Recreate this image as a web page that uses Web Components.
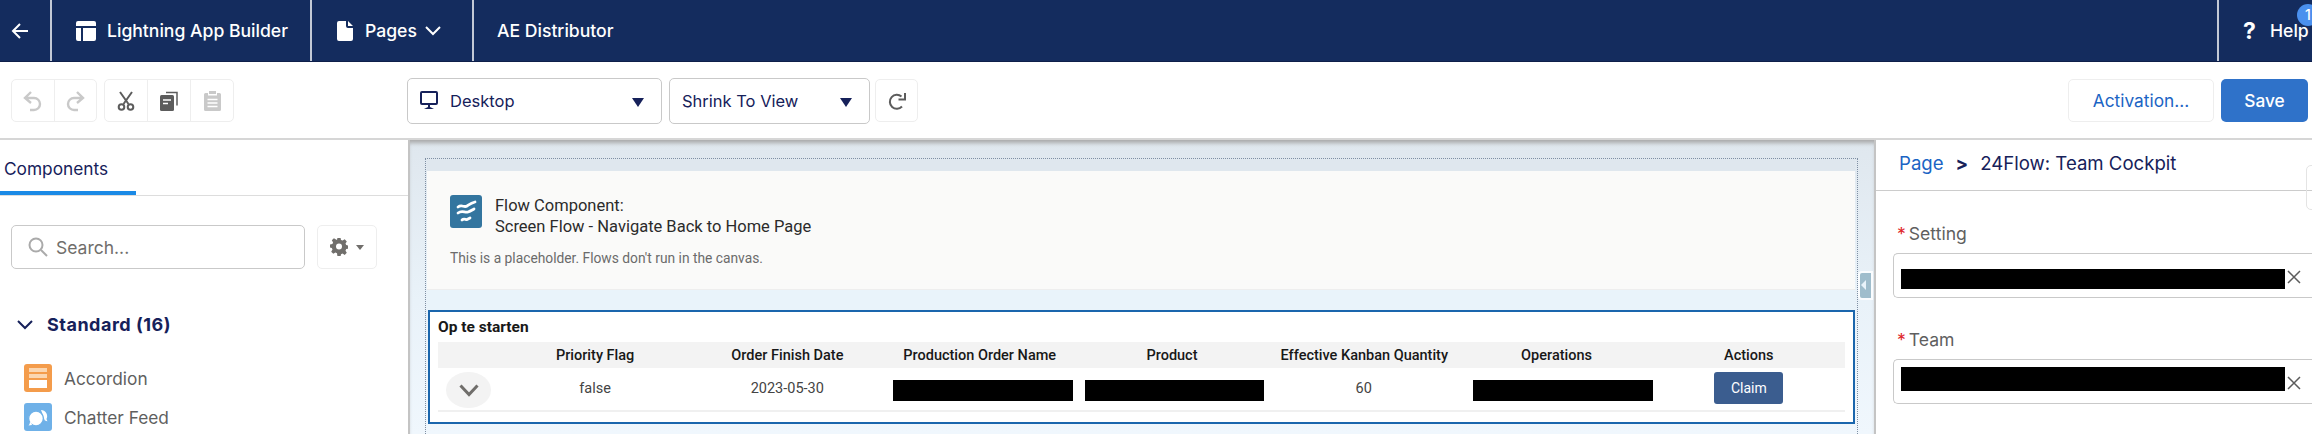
<!DOCTYPE html>
<html lang="en">
<head>
<meta charset="utf-8">
<title>Lightning App Builder</title>
<style>
    html, body { margin: 0; height: 434px; overflow: hidden; background: #fff; }
    body { font-family: Inter, "Liberation Sans", sans-serif; }
    builder-app { height: 434px; }
</style>
</head>
<body>
<builder-app>
    <builder-header slot="header"></builder-header>
    <builder-toolbar slot="toolbar"></builder-toolbar>
    <component-panel slot="left"></component-panel>
    <page-canvas slot="center"></page-canvas>
    <property-panel slot="right"></property-panel>
</builder-app>

<script>
// Mock data for the canvas table
const TABLE_DATA = {
    title: 'Op te starten',
    columns: ['Priority Flag', 'Order Finish Date', 'Production Order Name', 'Product', 'Effective Kanban Quantity', 'Operations', 'Actions'],
    row: [
        { text: 'false' },
        { text: '2023-05-30' },
        { redact: true, left: 10, width: 180 },
        { redact: true, left: 9, width: 179 },
        { text: '60' },
        { redact: true, left: 13, width: 180 },
        { button: 'Claim' }
    ]
};

const ICONS = {
    back: '<svg width="20" height="20" viewBox="0 0 20 20" fill="none" stroke="#fff" stroke-width="2"><path d="M18 10H3M10 3l-7 7 7 7"/></svg>',
    builder: '<svg width="22" height="22" viewBox="0 0 22 22"><path fill="#fff" d="M3 1h16a2 2 0 0 1 2 2v3H1V3a2 2 0 0 1 2-2zM1 8h5v13H3a2 2 0 0 1-2-2zM8 8h13v11a2 2 0 0 1-2 2H8z"/></svg>',
    page: '<svg width="16" height="22" viewBox="0 0 16 22"><path fill="#fff" d="M2 1h7v5a2 2 0 0 0 2 2h5v11a2 2 0 0 1-2 2H2a2 2 0 0 1-2-2V3a2 2 0 0 1 2-2zM11 1l5 5h-5z"/></svg>',
    chevron: '<svg width="16" height="10" viewBox="0 0 16 10" fill="none" stroke="currentColor" stroke-width="2"><path d="M1 1l7 7 7-7"/></svg>',
    undo: '<svg width="20" height="22" viewBox="0 0 20 22" fill="none" stroke="#c9c9c9" stroke-width="2.4"><path d="M8 2L2 8l6 5M2 8h9a6 6 0 0 1 0 12H7"/></svg>',
    redo: '<svg width="20" height="22" viewBox="0 0 20 22" fill="none" stroke="#c9c9c9" stroke-width="2.4"><path d="M12 2l6 6-6 5M18 8H9a6 6 0 0 0 0 12h4"/></svg>',
    cut: '<svg width="18" height="20" viewBox="0 0 18 20" fill="none" stroke="#5c5c5c" stroke-width="2"><path d="M3 1l8.500 12M15 1L6.500 13"/><circle cx="4.500" cy="16" r="2.800"/><circle cx="13.500" cy="16" r="2.800"/></svg>',
    copy: '<svg width="18" height="20" viewBox="0 0 18 20"><path fill="none" stroke="#5c5c5c" stroke-width="1.500" d="M6 1.500h11v13"/><rect x="0" y="4" width="14" height="16" rx="1.500" fill="#5c5c5c"/><path stroke="#fff" stroke-width="1.600" d="M3 9h8M3 12.500h5"/></svg>',
    paste: '<svg width="17" height="20" viewBox="0 0 17 20"><path fill="#c9c9c9" d="M5 0h7v3H5zM1.500 2H4v2.500h9V2h2.500A1.500 1.500 0 0 1 17 3.500v15a1.500 1.500 0 0 1-1.500 1.500h-14A1.500 1.500 0 0 1 0 18.500v-15A1.500 1.500 0 0 1 1.500 2z"/><path stroke="#fff" stroke-width="1.500" d="M3.500 8.500h10M3.500 12h10M3.500 15.500h10"/></svg>',
    desktop: '<svg width="20" height="20" viewBox="0 0 20 20" fill="none"><rect x="1" y="1" width="16" height="12" rx="1" stroke="#16215a" stroke-width="2"/><path fill="#16215a" d="M8 14h2v2l4 2H4l4-2z"/></svg>',
    refresh: '<svg width="20" height="20" viewBox="0 0 20 20" fill="none" stroke="#5c5c5c" stroke-width="2"><path d="M14.500 5.500a7 7 0 1 0 .5 10"/><path d="M18 2v6.500h-6.500"/></svg>',
    search: '<svg width="20" height="20" viewBox="0 0 20 20" fill="none" stroke="#aaa" stroke-width="2"><circle cx="8" cy="8" r="6.500"/><path d="M13 13l6 6"/></svg>',
    gear: '<svg width="18" height="18" viewBox="0 0 18 18"><path fill="#706e6b" d="M7.500 0h3l.5 2.400 1.600.7 2.100-1.300 2.100 2.100-1.300 2.100.7 1.600 2.400.5v3l-2.400.5-.7 1.600 1.300 2.100-2.100 2.100-2.100-1.300-1.600.7-.5 2.400h-3L7 15.700l-1.600-.7-2.100 1.300-2.100-2.100 1.300-2.100-.7-1.600L0 10V7l2.400-.5.7-1.600-1.300-2.100 2.100-2.100 2.100 1.300L7 2.400z" transform="translate(0 -.5)"/><circle cx="9" cy="8.500" r="3" fill="#fff"/></svg>',
    accordion: '<svg width="28" height="28" viewBox="0 0 28 28"><rect width="28" height="28" rx="3" fill="#f49c4b"/><path fill="#fbd6b0" d="M5 4h18v4H5zM5 10h18v4H5z"/><path fill="#fff" d="M5 16h18v8H5z"/></svg>',
    chatter: '<svg width="28" height="28" viewBox="0 0 28 28"><rect width="28" height="28" rx="3" fill="#6fb1e8"/><path fill="#fff" d="M17 7a6.200 6.200 0 0 1 5.500 9c.2 1 .6 1.600 1 2.200-1 0-2-.3-2.800-.9z"/><circle cx="12" cy="15.500" r="7.400" fill="#fff" stroke="#6fb1e8" stroke-width="1.400"/><path fill="#fff" d="M7 19l1 3-3.500.6c1-.9 1.300-2 1.300-3z"/></svg>',
    flow: '<svg width="32" height="33" viewBox="0 0 32 33"><rect width="32" height="33" rx="3" fill="#33759f"/><g fill="none" stroke="#fff" stroke-width="2.800" stroke-linecap="round"><path d="M8 12c4-3 6 1 9-1s4-3 8-4"/><path d="M8 18c4-3 7 0 10-1s4-2 6-3"/><path d="M12 25c2-2 4 0 5-.5s2-1 3-1.500"/></g></svg>',
    close: '<svg width="14" height="14" viewBox="0 0 14 14" fill="none" stroke="#5c5c5c" stroke-width="1.500"><path d="M1 1l12 12M13 1L1 13"/></svg>'
};

// ==========================================================================
// Web Component: <builder-app>
// ==========================================================================
class BuilderApp extends HTMLElement {
    constructor() {
        super();
        this.attachShadow({ mode: 'open' });
    }

    connectedCallback() {
        this.shadowRoot.innerHTML = `
            <style>
                :host {
                    display: grid;
                    grid-template-columns: 408px 1fr 436px;
                    grid-template-rows: 62px 78px 1fr;
                    overflow: hidden;
                }
                ::slotted([slot=header]), ::slotted([slot=toolbar]) { grid-column: 1 / -1; }
            </style>
            <slot name="header"></slot>
            <slot name="toolbar"></slot>
            <slot name="left"></slot>
            <slot name="center"></slot>
            <slot name="right"></slot>
        `;
    }
}
customElements.define('builder-app', BuilderApp);

// ==========================================================================
// Web Component: <builder-header>
// ==========================================================================
class BuilderHeader extends HTMLElement {
    constructor() {
        super();
        this.attachShadow({ mode: 'open' });
    }

    connectedCallback() {
        this.shadowRoot.innerHTML = `
            <style>
                :host {
                    display: flex;
                    background: #142c5e;
                    color: #fff;
                    font-size: 17.600px;
                    font-weight: 500;
                    border-bottom: 1px solid #0e1f4a;
                    box-sizing: border-box;
                    height: 62px;
                }
                .item {
                    display: flex;
                    align-items: center;
                    box-sizing: border-box;
                    border-right: 2px solid #c3c9d6;
                    flex: none;
                }
                .back { width: 52px; padding-left: 10px; }
                .app { width: 260px; padding-left: 23px; gap: 10px; }
                .pages { width: 162px; padding-left: 25px; gap: 12px; }
                .pages svg:last-child { margin-left: -4px; }
                .name { padding-left: 23px; border: none; }
                .fill { flex: 1; }
                .help {
                    position: relative;
                    width: 95px;
                    border: none;
                    border-left: 2px solid #c3c9d6;
                    padding-left: 24px;
                    gap: 13px;
                }
                .q { font-size: 23px; font-weight: 700; width: 14px; }
                .badge {
                    position: absolute;
                    left: 78px;
                    top: 4px;
                    width: 22px;
                    height: 22px;
                    border-radius: 50%;
                    background: #4a90ee;
                    font-size: 14px;
                    line-height: 22px;
                    text-align: center;
                }
            </style>
            <div class="item back">${ICONS.back}</div>
            <div class="item app">${ICONS.builder}<span>Lightning App Builder</span></div>
            <div class="item pages">${ICONS.page}<span>Pages</span>${ICONS.chevron}</div>
            <div class="item name">AE Distributor</div>
            <div class="fill"></div>
            <div class="item help"><span class="q">?</span><span>Help</span><span class="badge">1</span></div>
        `;
    }
}
customElements.define('builder-header', BuilderHeader);

// ==========================================================================
// Web Component: <builder-toolbar>
// ==========================================================================
class BuilderToolbar extends HTMLElement {
    constructor() {
        super();
        this.attachShadow({ mode: 'open' });
    }

    connectedCallback() {
        this.shadowRoot.innerHTML = `
            <style>
                :host {
                    display: flex;
                    align-items: flex-start;
                    box-sizing: border-box;
                    height: 78px;
                    padding: 17px 4px 0 11px;
                    background: #fff;
                    border-bottom: 2px solid #d6d6d6;
                    color: #16215a;
                    font-size: 16.500px;
                }
                .group {
                    display: flex;
                    height: 43px;
                    border: 1px solid #eeeeee;
                    border-radius: 5px;
                    box-sizing: border-box;
                    flex: none;
                }
                .undo { width: 86px; }
                .edit { width: 130px; margin-left: 7px; }
                .group span {
                    flex: 1;
                    display: flex;
                    align-items: center;
                    justify-content: center;
                    border-right: 1px solid #eeeeee;
                }
                .group span:last-child { border-right: none; }
                .select {
                    display: flex;
                    align-items: center;
                    height: 46px;
                    margin-top: -1px;
                    box-sizing: border-box;
                    border: 1.500px solid #c9c9c9;
                    border-radius: 5px;
                    flex: none;
                }
                .desktop { width: 255px; margin-left: 173px; padding: 0 17px 0 12px; gap: 10px; }
                .shrink { width: 201px; margin-left: 7px; padding: 0 17px 0 12px; }
                .label { flex: 1; }
                .caret { width: 0; height: 0; border: 6.500px solid transparent; border-top: 9px solid #16215a; border-bottom: 0; margin-top: 2px; }
                .refresh {
                    width: 43px;
                    height: 43px;
                    margin-left: 5px;
                    border: 1px solid #eeeeee;
                    border-radius: 5px;
                    box-sizing: border-box;
                    display: flex;
                    align-items: center;
                    justify-content: center;
                }
                .fill { flex: 1; }
                .btn {
                    height: 43px;
                    box-sizing: border-box;
                    border-radius: 5px;
                    display: flex;
                    align-items: center;
                    justify-content: center;
                    font-size: 17.300px;
                }
                .activation { width: 146px; border: 1px solid #eeeeee; color: #1b64c4; }
                .save { width: 87px; margin-left: 7px; background: #2f72c9; color: #fff; font-weight: 500; }
            </style>
            <div class="group undo"><span>${ICONS.undo}</span><span>${ICONS.redo}</span></div>
            <div class="group edit"><span>${ICONS.cut}</span><span>${ICONS.copy}</span><span>${ICONS.paste}</span></div>
            <div class="select desktop">${ICONS.desktop}<span class="label">Desktop</span><i class="caret"></i></div>
            <div class="select shrink"><span class="label">Shrink To View</span><i class="caret"></i></div>
            <div class="refresh">${ICONS.refresh}</div>
            <div class="fill"></div>
            <div class="btn activation">Activation...</div>
            <div class="btn save">Save</div>
        `;
    }
}
customElements.define('builder-toolbar', BuilderToolbar);

// ==========================================================================
// Web Component: <component-panel>
// ==========================================================================
class ComponentPanel extends HTMLElement {
    constructor() {
        super();
        this.attachShadow({ mode: 'open' });
    }

    connectedCallback() {
        this.shadowRoot.innerHTML = `
            <style>
                :host {
                    display: block;
                    height: 294px;
                    overflow: hidden;
                    background: #fff;
                    color: #16215a;
                }
                .tabs { height: 56px; box-sizing: border-box; border-bottom: 1px solid #dddddd; }
                .tab {
                    width: 136px;
                    height: 55px;
                    box-sizing: border-box;
                    padding: 18px 0 0 4px;
                    font-size: 17.300px;
                    line-height: 22px;
                    border-bottom: 4px solid #1b8ae6;
                }
                .tools { display: flex; gap: 12px; padding: 29px 0 0 11px; }
                .search {
                    width: 294px;
                    height: 44px;
                    box-sizing: border-box;
                    border: 1.500px solid #c9c9c9;
                    border-radius: 5px;
                    display: flex;
                    align-items: center;
                    gap: 8px;
                    padding-left: 16px;
                    color: #706e6b;
                    font-size: 17.500px;
                }
                .gear {
                    width: 60px;
                    height: 44px;
                    box-sizing: border-box;
                    border: 1px solid #eeeeee;
                    border-radius: 5px;
                    display: flex;
                    align-items: center;
                    justify-content: center;
                    gap: 8px;
                }
                .gear i { width: 0; height: 0; border: 4.500px solid transparent; border-top: 5px solid #706e6b; border-bottom: 0; }
                .group {
                    display: flex;
                    align-items: center;
                    gap: 14px;
                    padding: 46px 0 0 17px;
                    font-size: 18px;
                    font-weight: 700;
                    letter-spacing: .5px;
                    line-height: 20px;
                }
                ul { list-style: none; margin: 29px 0 0; padding: 0 0 0 24px; }
                li {
                    display: flex;
                    align-items: center;
                    gap: 12px;
                    height: 28px;
                    margin-bottom: 11px;
                    color: #5f5f5f;
                    font-size: 17.300px;
                }
            </style>
            <div class="tabs"><div class="tab">Components</div></div>
            <div class="tools">
                <div class="search">${ICONS.search}<span>Search...</span></div>
                <div class="gear">${ICONS.gear}<i></i></div>
            </div>
            <div class="group">${ICONS.chevron}<span>Standard (16)</span></div>
            <ul>
                <li>${ICONS.accordion}Accordion</li>
                <li>${ICONS.chatter}Chatter Feed</li>
            </ul>
        `;
    }
}
customElements.define('component-panel', ComponentPanel);

// ==========================================================================
// Web Component: <data-table>
// ==========================================================================
class DataTable extends HTMLElement {
    constructor() {
        super();
        this.attachShadow({ mode: 'open' });
    }

    cell(item) {
        if (item.redact) {
            return `<div class="cell"><span class="redact" style="margin-left:${item.left}px;width:${item.width}px"></span></div>`;
        }
        if (item.button) {
            return `<div class="cell center"><span class="claim">${item.button}</span></div>`;
        }
        return `<div class="cell center text">${item.text}</div>`;
    }

    connectedCallback() {
        const { title, columns, row } = TABLE_DATA;

        this.shadowRoot.innerHTML = `
            <style>
                :host {
                    display: block;
                    height: 114px;
                    box-sizing: border-box;
                    margin-left: 1px;
                    padding: 0 8px;
                    background: #fff;
                    border: 2px solid #1a66ad;
                    font-family: Roboto, "Liberation Sans", sans-serif;
                    color: #181818;
                    font-size: 14.500px;
                }
                h3 { margin: 0; height: 30px; line-height: 30px; font-size: 15.500px; font-weight: 700; }
                .head, .row { display: grid; grid-template-columns: 61px repeat(7, 1fr); }
                .head {
                    height: 26px;
                    align-items: center;
                    text-align: center;
                    background: #f3f3f3;
                    font-weight: 500;
                }
                .row { height: 44px; border-bottom: 2px solid #f0f0f0; box-sizing: border-box; }
                .cell { display: flex; align-items: center; }
                .center { justify-content: center; }
                .text { color: #444; padding-bottom: 2px; }
                .toggle {
                    width: 45px;
                    height: 36px;
                    margin-left: 8px;
                    margin-top: 2px;
                    border-radius: 50%;
                    background: #f3f3f3;
                    display: flex;
                    align-items: center;
                    justify-content: center;
                    color: #706e6b;
                }
                .redact { display: block; height: 21px; background: #000; margin-top: 2px; }
                .claim {
                    width: 69px;
                    height: 32px;
                    margin-bottom: 2px;
                    border-radius: 3px;
                    background: #3b5d8f;
                    color: #fff;
                    font-size: 14px;
                    line-height: 32px;
                    text-align: center;
                }
            </style>
            <h3>${title}</h3>
            <div class="head"><span></span>${columns.map(col => `<span>${col}</span>`).join('')}</div>
            <div class="row">
                <div class="cell"><span class="toggle"><svg width="20" height="13" viewBox="0 0 20 13" fill="none" stroke="currentColor" stroke-width="3"><path d="M1.500 1.500L10 10.500l8.500-9"/></svg></span></div>
                ${row.map(item => this.cell(item)).join('')}
            </div>
        `;
    }
}
customElements.define('data-table', DataTable);

// ==========================================================================
// Web Component: <page-canvas>
// ==========================================================================
class PageCanvas extends HTMLElement {
    constructor() {
        super();
        this.attachShadow({ mode: 'open' });
    }

    connectedCallback() {
        this.shadowRoot.innerHTML = `
            <style>
                :host {
                    display: block;
                    position: relative;
                    height: 294px;
                    overflow: hidden;
                    box-sizing: border-box;
                    padding: 18px 16px 0 15px;
                    background: linear-gradient(#dfe7ee, #e9f2f9 55%, #f0f7fd);
                    border-left: 2px solid #c4c4c4;
                    border-right: 2px solid #c4c4c4;
                    box-shadow: inset 0 5px 4px -2px #a9a9a9;
                }
                .frame {
                    height: 300px;
                    box-sizing: border-box;
                    padding: 1px 2px 0 1px;
                    border: 1px dotted #7f8fa3;
                    border-bottom: none;
                }
                .band { height: 11px; background: #dfe7ee; }
                .flow {
                    height: 119px;
                    box-sizing: border-box;
                    padding: 25px 0 0 23px;
                    background: #fafaf9;
                    border-bottom: 1px solid #eeeeee;
                    font-family: Roboto, "Liberation Sans", sans-serif;
                }
                .title { display: flex; gap: 13px; color: #2b2b2b; font-size: 16.500px; line-height: 21px; margin-top: -1px; }
                .note { margin-top: 12px; color: #6b6b6b; font-size: 13.800px; line-height: 18px; }
                .gap { height: 20px; background: #e9f3fa; }
                .handle {
                    position: absolute;
                    right: 3px;
                    top: 133px;
                    width: 11px;
                    height: 25px;
                    border-radius: 2px 0 0 2px;
                    background: #9fbdcc;
                    box-shadow: 0 0 0 2px #fafcfe;
                }
                .handle::after {
                    content: '';
                    position: absolute;
                    left: 1px;
                    top: 7px;
                    border: 5px solid transparent;
                    border-right: 5px solid #e9f3fa;
                    border-left: 0;
                }
            </style>
            <div class="frame">
                <div class="band"></div>
                <div class="flow">
                    <div class="title">${ICONS.flow}<div>Flow Component:<br>Screen Flow - Navigate Back to Home Page</div></div>
                    <div class="note">This is a placeholder. Flows don't run in the canvas.</div>
                </div>
                <div class="gap"></div>
                <data-table></data-table>
            </div>
            <div class="handle"></div>
        `;
    }
}
customElements.define('page-canvas', PageCanvas);

// ==========================================================================
// Web Component: <lookup-field>
// ==========================================================================
class LookupField extends HTMLElement {
    constructor() {
        super();
        this.attachShadow({ mode: 'open' });
    }

    connectedCallback() {
        const bar = this.getAttribute('bar') || '20';
        const shift = this.getAttribute('shift') || '2';

        this.shadowRoot.innerHTML = `
            <style>
                :host { display: block; color: #5f5f5f; font-size: 17.600px; }
                label { display: block; height: 22px; line-height: 22px; padding-left: 4px; margin-bottom: 8px; }
                b { color: #e0272b; font-weight: 400; margin-right: 3px; }
                .box {
                    display: flex;
                    align-items: center;
                    height: 45px;
                    box-sizing: border-box;
                    margin-right: -4px;
                    padding: 3px 0 0 7px;
                    border: 1.500px solid #c9c9c9;
                    border-radius: 5px 0 0 5px;
                    border-right: none;
                }
                .bar { width: 384px; height: ${bar}px; background: #000; transform: translateY(${shift}px); }
                svg { margin-left: 2px; }
            </style>
            <label><b>*</b><slot></slot></label>
            <div class="box"><span class="bar"></span>${ICONS.close}</div>
        `;
    }
}
customElements.define('lookup-field', LookupField);

// ==========================================================================
// Web Component: <property-panel>
// ==========================================================================
class PropertyPanel extends HTMLElement {
    constructor() {
        super();
        this.attachShadow({ mode: 'open' });
    }

    connectedCallback() {
        this.shadowRoot.innerHTML = `
            <style>
                :host { display: block; position: relative; height: 294px; overflow: hidden; background: #fff; color: #16215a; }
                .crumbs {
                    display: flex;
                    align-items: center;
                    height: 51px;
                    box-sizing: border-box;
                    padding: 0 0 5px 23px;
                    border-bottom: 1.500px solid #cccccc;
                    font-size: 18.600px;
                }
                .crumbs a { color: #1b64c4; }
                .crumbs b { margin: 0 12px; }
                .fields { padding: 32px 0 0 17px; display: flex; flex-direction: column; gap: 31px; }
                .tab {
                    position: absolute;
                    right: -8px;
                    top: 25px;
                    width: 12px;
                    height: 43px;
                    border: 1.500px solid #e4e4e4;
                    border-radius: 5px;
                }
            </style>
            <div class="crumbs"><a>Page</a><b>&gt;</b><span>24Flow: Team Cockpit</span></div>
            <div class="tab"></div>
            <div class="fields">
                <lookup-field>Setting</lookup-field>
                <lookup-field bar="24" shift="-4">Team</lookup-field>
            </div>
        `;
    }
}
customElements.define('property-panel', PropertyPanel);
</script>
</body>
</html>
